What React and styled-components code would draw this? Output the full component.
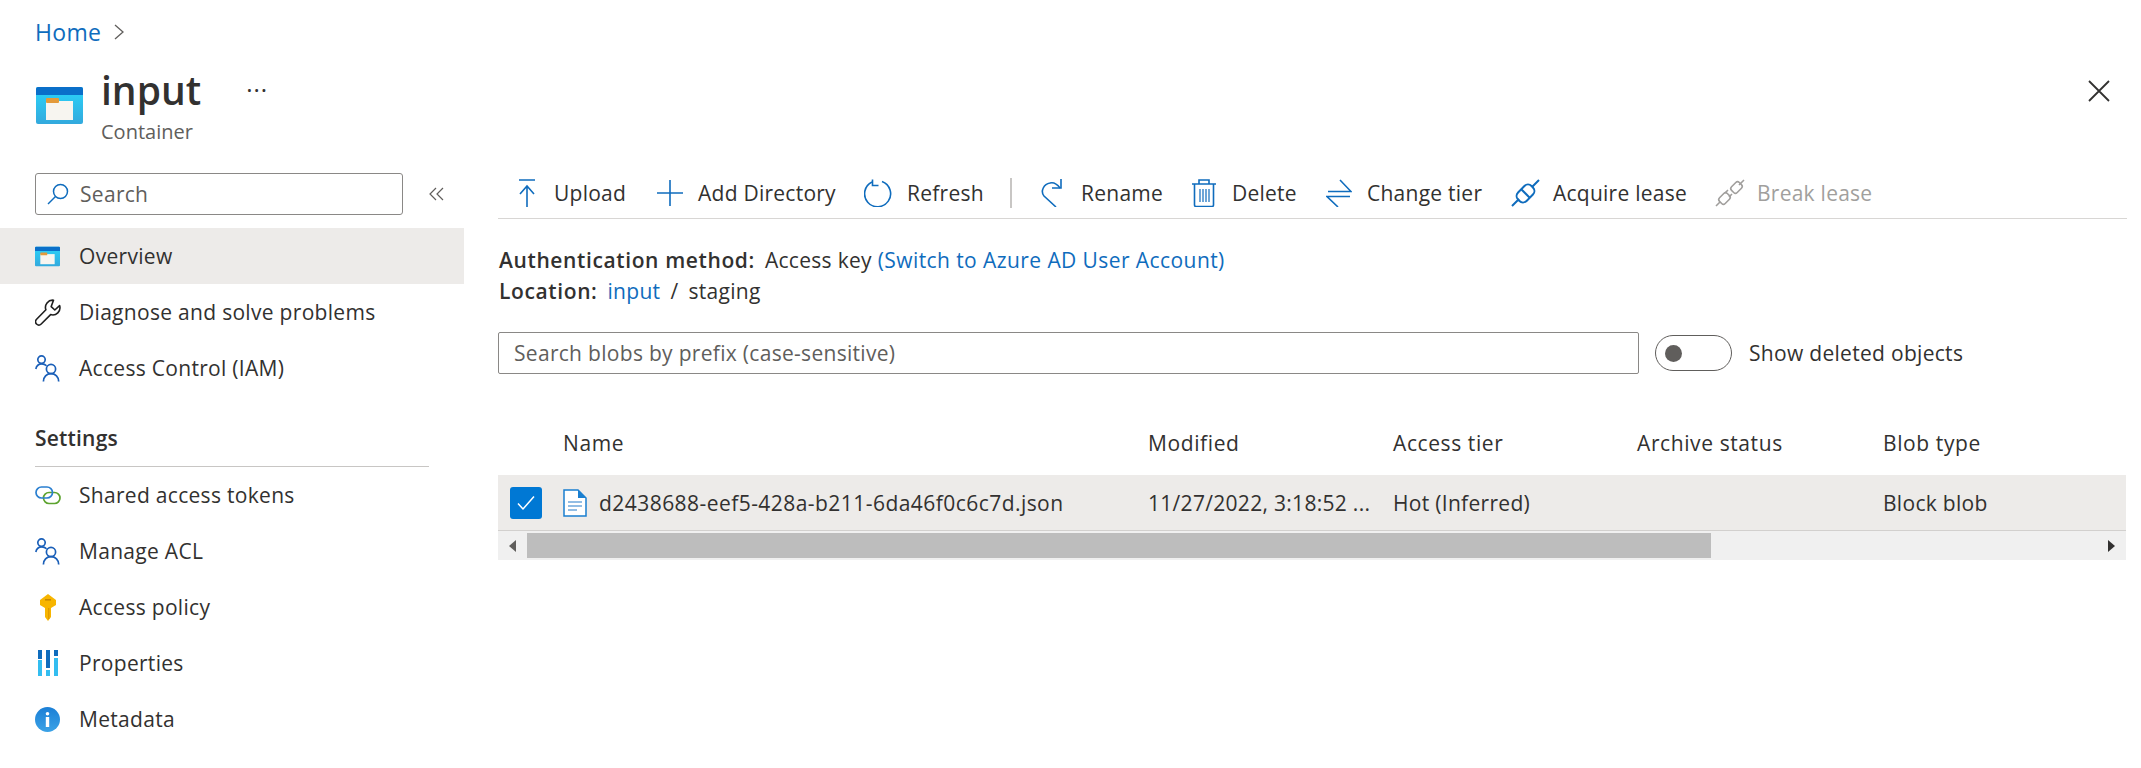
import React from "react";
import styled, { createGlobalStyle } from "styled-components";

const GlobalStyle = createGlobalStyle`
  html, body {
    margin: 0;
    padding: 0;
    background: #fff;
    color: #323130;
    font-family: "Open Sans", "Noto Sans", sans-serif;
    font-size: 21px;
    letter-spacing: 0.3px;
  }
  * { box-sizing: border-box; }
`;

const Page = styled.div`
  width: 2141px;
  height: 768px;
  overflow: hidden;
`;

const Breadcrumb = styled.div`
  display: flex;
  align-items: center;
  gap: 13px;
  height: 63px;
  padding: 0 0 0 35px;
`;

const Link = styled.a`
  color: #0f6cbd;
  font-size: ${(p) => p.$size || 21}px;
  letter-spacing: ${(p) => p.$spacing ?? 0.3}px;
`;

const Header = styled.div`
  display: flex;
  height: 110px;
  padding: 0 30px 0 36px;
`;

const HeaderIcon = styled.div`
  width: 47px;
  padding-top: 24px;
  margin-right: 18px;
`;

const Titles = styled.div`
  display: flex;
  flex-direction: column;
`;

const TitleRow = styled.div`
  display: flex;
  align-items: center;
  height: 54px;
`;

const Title = styled.h1`
  margin: 0;
  font-size: 39px;
  font-weight: 600;
  line-height: 54px;
  letter-spacing: 0;
`;

const Ellipsis = styled.span`
  margin: 0 0 0 45px;
  font-size: 24px;
  line-height: 22px;
  padding-bottom: 1px;
  letter-spacing: 1px;
`;

const Subtitle = styled.div`
  font-size: 20px;
  color: #605e5c;
  margin-top: 1px;
  letter-spacing: 0;
`;

const Close = styled.button`
  margin: 16px 0 0 auto;
  width: 24px;
  height: 24px;
  padding: 0;
  border: none;
  background: none;
  align-self: flex-start;
`;

const Body = styled.div`
  display: flex;
`;

const Sidebar = styled.nav`
  width: 464px;
  flex-shrink: 0;
`;

const SideSearchRow = styled.div`
  display: flex;
  align-items: center;
  height: 42px;
  padding-left: 35px;
  margin-bottom: 13px;
`;

const SideSearch = styled.div`
  display: flex;
  align-items: center;
  gap: 11px;
  width: 368px;
  height: 42px;
  padding-left: 11px;
  border: 1px solid #8a8886;
  border-radius: 3px;
  color: #605e5c;
`;

const Collapse = styled.span`
  display: flex;
  margin-left: 26px;
`;

const NavItem = styled.div`
  display: flex;
  align-items: center;
  height: 56px;
  padding-left: 35px;
  background: ${(p) => (p.$active ? "#edebe9" : "transparent")};
`;

const NavIcon = styled.span`
  display: flex;
  justify-content: ${(p) => (p.$center ? "center" : "flex-start")};
  width: 26px;
  margin-right: 18px;
`;

const SectionTitle = styled.div`
  margin: 27px 0 0 35px;
  width: 394px;
  height: 44px;
  border-bottom: 1px solid #c8c6c4;
  font-weight: 600;
  line-height: 30px;
  letter-spacing: 0.2px;
`;

const Main = styled.main`
  flex: 1;
  padding: 0 14px 0 34px;
`;

const Toolbar = styled.div`
  display: flex;
  align-items: center;
  height: 52px;
  margin-top: -6px;
  border-bottom: 1px solid #d8d6d4;
`;

const ToolButton = styled.div`
  display: flex;
  align-items: center;
  flex-shrink: 0;
  width: ${(p) => p.$width}px;
  padding-left: ${(p) => p.$pad}px;
  letter-spacing: 0.25px;
  color: ${(p) => (p.$disabled ? "#a19f9d" : "#323130")};
`;

const ToolIcon = styled.span`
  display: flex;
  justify-content: center;
  width: ${(p) => p.$width}px;
  margin-right: ${(p) => p.$gap}px;
`;

const ToolDivider = styled.span`
  width: 2px;
  height: 30px;
  background: #c8c6c4;
  margin-right: 28px;
`;

const Info = styled.div`
  padding: 23px 0 0 1px;
`;

const InfoLine = styled.div`
  height: 31px;
  line-height: 36px;
  white-space: pre;
`;

const Strong = styled.b`
  font-weight: 600;
  margin-right: 10px;
  letter-spacing: 0.62px;
`;

const Slash = styled.span`
  margin: 0 10px;
`;

const FilterRow = styled.div`
  display: flex;
  align-items: center;
  margin-top: 28px;
`;

const FilterInput = styled.div`
  display: flex;
  align-items: center;
  width: 1141px;
  height: 42px;
  padding-left: 15px;
  border: 1px solid #8a8886;
  border-radius: 2px;
  color: #605e5c;
`;

const Toggle = styled.span`
  display: flex;
  align-items: center;
  width: 77px;
  height: 36px;
  margin: 0 17px 0 16px;
  padding-left: 9px;
  border: 1px solid #605e5c;
  border-radius: 18px;
`;

const Knob = styled.span`
  width: 17px;
  height: 17px;
  border-radius: 50%;
  background: #605e5c;
`;

const Table = styled.div`
  margin-top: 42px;
  width: 1628px;
`;

const Row = styled.div`
  display: grid;
  grid-template-columns: 65px 585px 245px 244px 246px 1fr;
  align-items: center;
  height: ${(p) => (p.$head ? 59 : 56)}px;
  padding-bottom: ${(p) => (p.$head ? 5 : 0)}px;
  background: ${(p) => (p.$head ? "transparent" : "#edebe9")};
  border-bottom: ${(p) => (p.$head ? "none" : "1px solid #d2d0ce")};
`;

const HeadCell = styled.span`
  font-weight: 500;
  letter-spacing: 0.6px;
`;

const Cell = styled.span`
  white-space: nowrap;
  letter-spacing: ${(p) => p.$spacing ?? 0.3}px;
`;

const CheckCell = styled.span`
  display: flex;
  padding-left: 12px;
`;

const CheckBox = styled.span`
  display: flex;
  align-items: center;
  justify-content: center;
  width: 32px;
  height: 32px;
  border-radius: 3px;
  background: #0078d4;
`;

const NameCell = styled.span`
  display: flex;
  align-items: center;
  gap: 12px;
`;

const ScrollBar = styled.div`
  display: flex;
  align-items: center;
  height: 29px;
  background: #f0f0f0;
`;

const ScrollArrow = styled.span`
  display: flex;
  justify-content: center;
  width: 29px;
`;

const ScrollThumb = styled.span`
  width: 1184px;
  height: 25px;
  background: #bdbdbd;
  margin-right: auto;
`;

const ContainerIcon = ({ w, h, id }) => (
  <svg width={w} height={h} viewBox="0 0 47 37">
    <defs>
      <linearGradient id={id} x1="0" y1="0" x2="0" y2="1">
        <stop offset="0" stopColor="#29d4fa" />
        <stop offset="1" stopColor="#33a9dd" />
      </linearGradient>
    </defs>
    <rect x="0" y="0" width="47" height="37" rx="2" fill={`url(#${id})`} />
    <path d="M0 2a2 2 0 0 1 2-2h43a2 2 0 0 1 2 2v6H0z" fill="#0a6fc9" />
    <rect x="10" y="14" width="27" height="19" fill="#f7f5f0" />
    <rect x="10" y="11" width="13" height="5" rx="1" fill="#e39a3b" />
  </svg>
);

const SearchGlyph = () => (
  <svg width="22" height="22" viewBox="0 0 22 22" fill="none" stroke="#0f6cbd" strokeWidth="1.5">
    <circle cx="13.5" cy="8.5" r="7" />
    <path d="M8.5 13.5L1 21" />
  </svg>
);

const Wrench = () => (
  <svg width="26" height="27" viewBox="0 0 26 27" fill="none" stroke="#1f1f1f" strokeWidth="1.6" strokeLinejoin="round">
    <path d="M18.5 1.2a7.2 7.2 0 0 0-7.6 9.6L1.6 20.3a3.1 3.1 0 0 0 4.6 4.7l9.4-9.4a7.2 7.2 0 0 0 9-9l-4.800 4.400-3.600-3.400z" />
  </svg>
);

const People = () => (
  <svg width="26" height="27" viewBox="0 0 26 27" fill="none" stroke="#1a5fb8" strokeWidth="1.7">
    <circle cx="6.5" cy="4.6" r="3.7" />
    <circle cx="16" cy="14" r="4.6" />
    <path d="M.8 14c.6-3.200 3-5.200 6-5.200 2 0 3.600.8 4.700 2" />
    <path d="M8.400 26.500c0-4.600 3.200-7.800 7.600-7.800s7.700 3.200 7.700 7.800" />
  </svg>
);

const Tokens = () => (
  <svg width="26" height="19" viewBox="0 0 26 19" fill="none" strokeWidth="1.7">
    <rect x="8.500" y="6.500" width="16.500" height="11" rx="5.500" stroke="#5ca32e" />
    <rect x="1" y="1" width="16.500" height="11" rx="5.500" stroke="#2a7fd0" />
  </svg>
);

const Key = () => (
  <svg width="18" height="27" viewBox="0 0 18 27">
    <path d="M9 0l8 6v5l-5 3v9l-3 4-3-4v-9l-5-3V6z" fill="#f7b500" />
    <rect x="6" y="5" width="6" height="1.600" fill="#c98a00" />
    <rect x="9" y="14" width="1.400" height="11" fill="#e09b00" />
  </svg>
);

const Properties = () => (
  <svg width="20" height="26" viewBox="0 0 20 26">
    <rect x="0" y="0" width="4" height="9" fill="#0f6cbd" />
    <rect x="0" y="10" width="4" height="16" fill="#33bdf0" />
    <rect x="8" y="0" width="4" height="18" fill="#0f6cbd" />
    <rect x="8" y="20" width="4" height="6" fill="#33bdf0" />
    <rect x="16" y="0" width="4" height="6" fill="#0f6cbd" />
    <rect x="16" y="8" width="4" height="18" fill="#33bdf0" />
  </svg>
);

const InfoIcon = () => (
  <svg width="25" height="25" viewBox="0 0 25 25">
    <defs>
      <linearGradient id="infoFill" x1="0" y1="0" x2="0" y2="1">
        <stop offset="0" stopColor="#1b7fd6" />
        <stop offset="1" stopColor="#3ba2e6" />
      </linearGradient>
    </defs>
    <circle cx="12.500" cy="12.500" r="12.500" fill="url(#infoFill)" />
    <circle cx="12.500" cy="6.800" r="1.800" fill="#fff" />
    <rect x="10.800" y="10" width="3.400" height="10" fill="#fff" />
  </svg>
);

const ToolSvg = ({ w = 28, h = 28, color = "#0f6cbd", children }) => (
  <svg width={w} height={h} viewBox={`0 0 ${w} ${h}`} fill="none" stroke={color} strokeWidth="1.6">
    {children}
  </svg>
);

const tools = [
  {
    label: "Upload", width: 138, pad: 20, iw: 18, gap: 18,
    icon: (
      <ToolSvg w={18}>
        <path d="M1 1h16M9 28V7M2 15l7-8 7 8" />
      </ToolSvg>
    ),
  },
  {
    label: "Add Directory", width: 208, pad: 20, iw: 28, gap: 14,
    icon: (
      <ToolSvg>
        <path d="M1 14h26M14 1v26" />
      </ToolSvg>
    ),
  },
  {
    label: "Refresh", width: 166, pad: 20, iw: 28, gap: 15,
    icon: (
      <ToolSvg>
        <path d="M18 2.500A13 13 0 1 1 8 3" />
        <path d="M8.500 .5v6h6" />
      </ToolSvg>
    ),
  },
];

const tools2 = [
  {
    label: "Rename", width: 152, pad: 0, iw: 26, gap: 15,
    icon: (
      <ToolSvg w={26}>
        <path d="M16 28L4 17C0 12 4 5 10 4c4-1 7 1 10 5" />
        <path d="M21 0v9h-9" />
      </ToolSvg>
    ),
  },
  {
    label: "Delete", width: 134, pad: 0, iw: 24, gap: 16,
    icon: (
      <ToolSvg w={24}>
        <path d="M0 5h24M7 5V1h10v4" />
        <path d="M2.500 5v21a1.500 1.500 0 0 0 1.500 1.500h16a1.500 1.500 0 0 0 1.500-1.500V5" />
        <path d="M8 10v13M11 10v13M14 10v13M17 10v13" strokeWidth="1.200" />
      </ToolSvg>
    ),
  },
  {
    label: "Change tier", width: 185, pad: 0, iw: 26, gap: 15,
    icon: (
      <ToolSvg w={26}>
        <path d="M2 12.500h23L14 1M24 17.500H1L12 28" />
      </ToolSvg>
    ),
  },
  {
    label: "Acquire lease", width: 204, pad: 0, iw: 29, gap: 13,
    icon: (
      <ToolSvg w={29}>
        <path d="M1 27l7-7M21 8l7-7" strokeWidth="2" />
        <rect x="5" y="8.500" width="19" height="12" rx="5" transform="rotate(-45 14.500 14.500)" strokeWidth="2" />
        <path d="M10 10l9 9" strokeWidth="2" />
      </ToolSvg>
    ),
  },
  {
    label: "Break lease", width: 160, pad: 0, iw: 30, gap: 12, disabled: true,
    icon: (
      <ToolSvg w={30} color="#a19f9d">
        <path d="M1 27l4-4M24 6l5-5M13 11l-3 3M17 15l-3 3" />
        <rect x="4" y="15.500" width="11" height="8" rx="2.500" transform="rotate(-45 9.500 19.500)" />
        <rect x="16" y="4.500" width="11" height="8" rx="2.500" transform="rotate(-45 21.500 8.500)" />
      </ToolSvg>
    ),
  },
];

const navTop = [
  { label: "Overview", active: true, icon: <ContainerIcon w={25} h={21} id="navBox" /> },
  { label: "Diagnose and solve problems", icon: <Wrench /> },
  { label: "Access Control (IAM)", icon: <People /> },
];

const navSettings = [
  { label: "Shared access tokens", icon: <Tokens /> },
  { label: "Manage ACL", icon: <People /> },
  { label: "Access policy", center: true, icon: <Key /> },
  { label: "Properties", center: true, icon: <Properties /> },
  { label: "Metadata", icon: <InfoIcon /> },
];

const renderNav = (item) => (
  <NavItem key={item.label} $active={item.active}>
    <NavIcon $center={item.center}>{item.icon}</NavIcon>
    {item.label}
  </NavItem>
);

const renderTool = (tool) => (
  <ToolButton key={tool.label} $width={tool.width} $pad={tool.pad} $disabled={tool.disabled}>
    <ToolIcon $width={tool.iw} $gap={tool.gap}>{tool.icon}</ToolIcon>
    {tool.label}
  </ToolButton>
);

export default function App() {
  return (
    <Page>
      <GlobalStyle />
      <Breadcrumb>
        <Link $size={23}>Home</Link>
        <svg width="11" height="16" viewBox="0 0 11 16" fill="none" stroke="#605e5c" strokeWidth="1.3">
          <path d="M1 1l8 7-8 7" />
        </svg>
      </Breadcrumb>
      <Header>
        <HeaderIcon>
          <ContainerIcon w={47} h={37} id="headBox" />
        </HeaderIcon>
        <Titles>
          <TitleRow>
            <Title>input</Title>
            <Ellipsis>···</Ellipsis>
          </TitleRow>
          <Subtitle>Container</Subtitle>
        </Titles>
        <Close>
          <svg width="24" height="24" viewBox="0 0 24 24" fill="none" stroke="#323130" strokeWidth="1.8">
            <path d="M2 2l20 20M22 2L2 22" />
          </svg>
        </Close>
      </Header>
      <Body>
        <Sidebar>
          <SideSearchRow>
            <SideSearch>
              <SearchGlyph />
              Search
            </SideSearch>
            <Collapse>
              <svg width="15" height="14" viewBox="0 0 15 14" fill="none" stroke="#605e5c" strokeWidth="1.2">
                <path d="M7 1L1 7l6 6M14 1L8 7l6 6" />
              </svg>
            </Collapse>
          </SideSearchRow>
          {navTop.map(renderNav)}
          <SectionTitle>Settings</SectionTitle>
          {navSettings.map(renderNav)}
        </Sidebar>
        <Main>
          <Toolbar>
            {tools.map(renderTool)}
            <ToolDivider />
            {tools2.map(renderTool)}
          </Toolbar>
          <Info>
            <InfoLine>
              <Strong>Authentication method:</Strong>Access key <Link $spacing={0.42}>(Switch to Azure AD User Account)</Link>
            </InfoLine>
            <InfoLine>
              <Strong>Location:</Strong>
              <Link>input</Link>
              <Slash>/</Slash>staging
            </InfoLine>
          </Info>
          <FilterRow>
            <FilterInput>Search blobs by prefix (case-sensitive)</FilterInput>
            <Toggle>
              <Knob />
            </Toggle>
            <span>Show deleted objects</span>
          </FilterRow>
          <Table>
            <Row $head>
              <span />
              <HeadCell>Name</HeadCell>
              <HeadCell>Modified</HeadCell>
              <HeadCell>Access tier</HeadCell>
              <HeadCell>Archive status</HeadCell>
              <HeadCell>Blob type</HeadCell>
            </Row>
            <Row>
              <CheckCell>
                <CheckBox>
                  <svg width="18" height="16" viewBox="0 0 18 16" fill="none" stroke="#fff" strokeWidth="1.5">
                    <path d="M1 8.500L6 14 17 1.500" />
                  </svg>
                </CheckBox>
              </CheckCell>
              <NameCell>
                <svg width="24" height="28" viewBox="0 0 24 28" fill="none">
                  <path d="M1 1h14l8 8v18H1z" fill="#fff" stroke="#1a7fd0" strokeWidth="1.5" />
                  <path d="M15 1l8 8h-8z" fill="#1a7fd0" />
                  <path d="M5 13h14M5 17h14M5 21h9" stroke="#6fa8dc" strokeWidth="1.6" />
                </svg>
                <Cell $spacing={0.45}>d2438688-eef5-428a-b211-6da46f0c6c7d.json</Cell>
              </NameCell>
              <Cell>11/27/2022, 3:18:52 ...</Cell>
              <Cell>Hot (Inferred)</Cell>
              <span />
              <Cell>Block blob</Cell>
            </Row>
            <ScrollBar>
              <ScrollArrow>
                <svg width="7" height="12" viewBox="0 0 7 12">
                  <path d="M7 0v12L0 6z" fill="#605e5c" />
                </svg>
              </ScrollArrow>
              <ScrollThumb />
              <ScrollArrow>
                <svg width="7" height="12" viewBox="0 0 7 12">
                  <path d="M0 0v12l7-6z" fill="#323130" />
                </svg>
              </ScrollArrow>
            </ScrollBar>
          </Table>
        </Main>
      </Body>
    </Page>
  );
}
